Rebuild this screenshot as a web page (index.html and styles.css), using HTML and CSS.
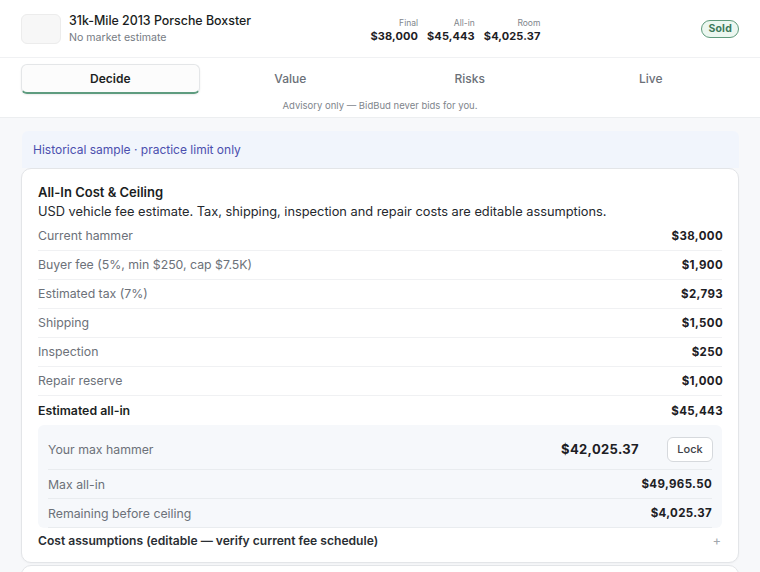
FILE: index.html
```html
<!DOCTYPE html>
<html lang="en">
<head>
<meta charset="utf-8">
<title>BidBud – 31k-Mile 2013 Porsche Boxster</title>
<link rel="stylesheet" href="styles.css">
</head>
<body>
<div class="top">
  <header class="header">
    <div class="thumb"></div>
    <div class="titles">
      <div class="title">31k-Mile 2013 Porsche Boxster</div>
      <div class="subtitle">No market estimate</div>
    </div>
    <div class="stats">
      <div class="stat"><div class="stat-label">Final</div><div class="stat-value">$38,000</div></div>
      <div class="stat"><div class="stat-label">All-in</div><div class="stat-value">$45,443</div></div>
      <div class="stat"><div class="stat-label">Room</div><div class="stat-value">$4,025.37</div></div>
    </div>
    <div class="badge">Sold</div>
  </header>
  <nav class="tabs">
    <div class="tab active">Decide</div>
    <div class="tab">Value</div>
    <div class="tab">Risks</div>
    <div class="tab">Live</div>
  </nav>
  <div class="advisory">Advisory only — BidBud never bids for you.</div>
</div>
<main class="main">
  <div class="banner">Historical sample · practice limit only</div>
  <section class="card">
    <h2 class="card-title">All-In Cost &amp; Ceiling</h2>
    <p class="card-sub">USD vehicle fee estimate. Tax, shipping, inspection and repair costs are editable assumptions.</p>
    <div class="rows">
      <div class="row"><span class="label">Current hammer</span><span class="value">$38,000</span></div>
      <div class="row"><span class="label">Buyer fee (5%, min $250, cap $7.5K)</span><span class="value">$1,900</span></div>
      <div class="row"><span class="label">Estimated tax (7%)</span><span class="value">$2,793</span></div>
      <div class="row"><span class="label">Shipping</span><span class="value">$1,500</span></div>
      <div class="row"><span class="label">Inspection</span><span class="value">$250</span></div>
      <div class="row"><span class="label">Repair reserve</span><span class="value">$1,000</span></div>
      <div class="row total"><span class="label">Estimated all-in</span><span class="value">$45,443</span></div>
    </div>
    <div class="ceiling">
      <div class="crow first">
        <span class="label">Your max hammer</span>
        <span class="max-value">$42,025.37</span>
        <button class="lock" type="button">Lock</button>
      </div>
      <div class="crow"><span class="label">Max all-in</span><span class="value">$49,965.50</span></div>
      <div class="crow"><span class="label">Remaining before ceiling</span><span class="value">$4,025.37</span></div>
    </div>
    <div class="assumptions">
      <span>Cost assumptions (editable — verify current fee schedule)</span>
      <span class="plus">+</span>
    </div>
  </section>
  <section class="card next"></section>
</main>
</body>
</html>
```
FILE: styles.css
```css
* { box-sizing: border-box; }
html, body { margin: 0; padding: 0; }
body {
  font-family: Inter, "Noto Sans", "Liberation Sans", sans-serif;
  background: #f7f8fa;
  color: #1f2328;
  width: 760px;
  height: 572px;
  overflow: hidden;
}
.top {
  background: #fff;
  border-bottom: 1px solid #eceef0;
}
.header {
  height: 58px;
  display: flex;
  align-items: center;
  padding: 0 21px;
  border-bottom: 1px solid #f0f1f3;
}
.thumb {
  width: 40px;
  height: 30px;
  border-radius: 6px;
  background: #f7f7f7;
  border: 1px solid #ececec;
  margin-right: 8px;
}
.titles { flex: 1; }
.title {
  font-size: 12.4px;
  font-weight: 500;
  line-height: 16px;
  color: #1a1d21;
  margin-top: 1px;
}
.subtitle {
  font-size: 10.6px;
  color: #767b83;
  line-height: 15px;
  margin-top: 1px;
}
.stats {
  display: flex;
  gap: 9px;
  margin-right: 161px;
  margin-top: 2px;
}
.stat { text-align: right; }
.stat-label {
  font-size: 8.5px;
  color: #80858c;
  line-height: 12px;
}
.stat-value {
  font-size: 11px;
  font-weight: 700;
  letter-spacing: 0.1px;
  line-height: 14px;
  color: #1d2024;
}
.badge {
  font-size: 10.5px;
  font-weight: 700;
  color: #3e7a5a;
  background: #ecf7f0;
  border: 1px solid #5f9b7c;
  border-radius: 10px;
  padding: 0 6px;
  height: 18px;
  line-height: 16px;
  letter-spacing: 0.2px;
}
.tabs {
  display: grid;
  grid-template-columns: repeat(4, 1fr);
  margin: 6px 21px 0;
}
.tab {
  height: 30px;
  display: flex;
  align-items: center;
  justify-content: center;
  font-size: 12px;
  font-weight: 500;
  color: #6b7078;
  padding-bottom: 1px;
}
.tab:nth-child(4) { padding-left: 3px; }
.tab.active {
  background: #fcfcfc;
  border: 1px solid #e4e6e8;
  border-bottom: 2px solid #5e9c7f;
  border-radius: 6px;
  box-shadow: 0 1px 2px rgba(0, 0, 0, 0.08);
  font-weight: 600;
  color: #1c1f23;
  margin-right: 1px;
  padding-bottom: 0;
}
.advisory {
  text-align: center;
  font-size: 9.5px;
  color: #80858c;
  line-height: 12px;
  padding: 6px 0 5px;
}
.main {
  padding: 13px 21px 0;
}
.banner {
  background: #f1f5fc;
  color: #4b4fae;
  font-size: 12px;
  line-height: 16px;
  padding: 11px 11px 10px;
  border-radius: 6px 6px 0 0;
  margin-left: 1px;
}
.card {
  background: #fff;
  border: 1px solid #e3e5e8;
  border-radius: 10px;
  padding: 15px 16px 10px;
  box-shadow: 0 1px 2px rgba(0, 0, 0, 0.03);
}
.card-title {
  margin: 0;
  font-size: 13px;
  font-weight: 600;
  line-height: 17px;
  color: #1a1d21;
}
.card-sub {
  margin: 2px 0 0;
  font-size: 12.8px;
  line-height: 17px;
  color: #24282d;
}
.rows { margin-top: 2px; }
.row {
  height: 29px;
  display: flex;
  align-items: center;
  justify-content: space-between;
  border-bottom: 1px solid #f0f1f3;
  padding-bottom: 1px;
}
.label {
  font-size: 12.3px;
  color: #6c7179;
}
.value {
  font-size: 11.5px;
  font-weight: 700;
  letter-spacing: 0.35px;
  color: #1d2024;
}
.row .value { margin-right: -1px; }
.row.total { border-bottom: none; padding-bottom: 0; }
.row.total .label {
  font-weight: 600;
  color: #1c1f23;
}
.ceiling {
  background: #f6f8fb;
  border-radius: 6px;
  padding: 4px 10px 0;
}
.crow {
  height: 29px;
  display: flex;
  align-items: center;
  justify-content: space-between;
  border-bottom: 1px solid #e9ecef;
}
.crow.first { height: 41px; }
.crow.first .label { flex: 1; }
.max-value {
  font-size: 13px;
  font-weight: 700;
  letter-spacing: 0.35px;
  color: #1d2024;
  margin-right: 28px;
}
.lock {
  font-family: inherit;
  width: 46px;
  height: 25px;
  background: #fff;
  border: 1px solid #d6d9dd;
  border-radius: 6px;
  font-size: 11px;
  font-weight: 500;
  color: #3d4147;
  padding: 0;
  margin-right: -1px;
}
.assumptions {
  height: 24px;
  display: flex;
  align-items: center;
  justify-content: space-between;
  font-size: 12.1px;
  font-weight: 600;
  color: #2a2e33;
}
.plus {
  font-weight: 400;
  font-size: 13px;
  color: #a3a8ae;
  margin-right: 1px;
}
.card.next {
  margin-top: 2px;
  height: 40px;
  padding: 0;
}
```
